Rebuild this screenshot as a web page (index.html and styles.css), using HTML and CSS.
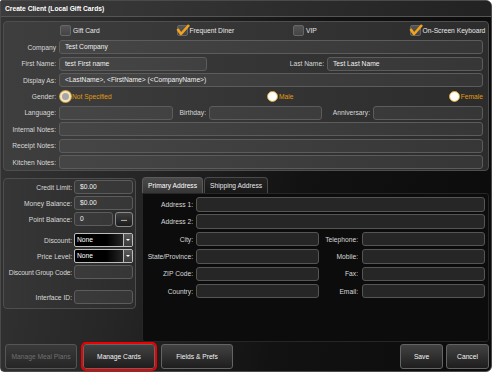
FILE: index.html
```html
<!DOCTYPE html>
<html lang="en">
<head>
  <meta charset="UTF-8" />
  <title>Create Client</title>
  <link rel="stylesheet" href="styles.css">
</head>
<body>
  <div class="window">
    <div class="titlebar">Create Client (Local Gift Cards)</div>
    <div class="content">
      <div class="top-panel">
        <div class="row">
          <span class="lbl"></span>
          <div class="checks">
            <label class="check"><span class="box"></span>Gift Card</label>
            <label class="check on"><span class="box"></span><svg class="tick" viewBox="0 0 14 12"><polyline points="1.5,5 5,10 13,1" /></svg>Frequent Diner</label>
            <label class="check"><span class="box"></span>VIP</label>
            <label class="check on"><span class="box"></span><svg class="tick" viewBox="0 0 14 12"><polyline points="1.5,5 5,10 13,1" /></svg>On-Screen Keyboard</label>
          </div>
        </div>
        <div class="row">
          <span class="lbl">Company</span>
          <div class="field grow">Test Company</div>
        </div>
        <div class="row">
          <span class="lbl">First Name:</span>
          <div class="field w-first">test First name</div>
          <span class="lbl mid grow">Last Name:</span>
          <div class="field w-last">Test Last Name</div>
        </div>
        <div class="row">
          <span class="lbl">Display As:</span>
          <div class="field grow">&lt;LastName&gt;, &lt;FirstName&gt; (&lt;CompanyName&gt;)</div>
        </div>
        <div class="row">
          <span class="lbl">Gender:</span>
          <div class="radios">
            <label class="radio"><span class="dot sel"></span>Not Specified</label>
            <label class="radio"><span class="dot"></span>Male</label>
            <label class="radio"><span class="dot"></span>Female</label>
          </div>
        </div>
        <div class="row">
          <span class="lbl">Language:</span>
          <div class="field w-lang"></div>
          <span class="lbl mid w-bday">Birthday:</span>
          <div class="field w-bdayf"></div>
          <span class="lbl mid grow">Anniversary:</span>
          <div class="field w-anniv"></div>
        </div>
        <div class="row">
          <span class="lbl">Internal Notes:</span>
          <div class="field grow"></div>
        </div>
        <div class="row">
          <span class="lbl">Receipt Notes:</span>
          <div class="field grow"></div>
        </div>
        <div class="row">
          <span class="lbl">Kitchen Notes:</span>
          <div class="field grow"></div>
        </div>
      </div>

      <div class="lower">
        <div class="left-col">
          <div class="money-panel">
            <div class="mrow">
              <span class="mlbl">Credit Limit:</span>
              <div class="field mfield">$0.00</div>
            </div>
            <div class="mrow">
              <span class="mlbl">Money Balance:</span>
              <div class="field mfield">$0.00</div>
            </div>
            <div class="mrow">
              <span class="mlbl">Point Balance:</span>
              <div class="field pfield">0</div>
              <button class="dots">...</button>
            </div>
            <div class="mrow gap-s">
              <span class="mlbl">Discount:</span>
              <div class="combo">None<span class="arrow"></span></div>
            </div>
            <div class="mrow">
              <span class="mlbl">Price Level:</span>
              <div class="combo">None<span class="arrow"></span></div>
            </div>
            <div class="mrow">
              <span class="mlbl wide">Discount Group Code:</span>
              <div class="field mfield"></div>
            </div>
            <div class="mrow gap-l">
              <span class="mlbl">Interface ID:</span>
              <div class="field mfield"></div>
            </div>
          </div>
        </div>

        <div class="tabs-col">
          <div class="tabstrip">
            <div class="tab active">Primary Address</div>
            <div class="tab">Shipping Address</div>
          </div>
          <div class="tab-body">
            <div class="arow">
              <span class="albl">Address 1:</span>
              <div class="field dark grow"></div>
            </div>
            <div class="arow">
              <span class="albl">Address 2:</span>
              <div class="field dark grow"></div>
            </div>
            <div class="arow">
              <span class="albl">City:</span>
              <div class="field dark half"></div>
              <span class="albl rl">Telephone:</span>
              <div class="field dark half"></div>
            </div>
            <div class="arow">
              <span class="albl">State/Province:</span>
              <div class="field dark half"></div>
              <span class="albl rl">Mobile:</span>
              <div class="field dark half"></div>
            </div>
            <div class="arow">
              <span class="albl">ZIP Code:</span>
              <div class="field dark half"></div>
              <span class="albl rl">Fax:</span>
              <div class="field dark half"></div>
            </div>
            <div class="arow">
              <span class="albl">Country:</span>
              <div class="field dark half"></div>
              <span class="albl rl">Email:</span>
              <div class="field dark half"></div>
            </div>
          </div>
        </div>
      </div>

      <div class="buttons">
        <button class="btn disabled">Manage Meal Plans</button>
        <button class="btn marked">Manage Cards</button>
        <button class="btn">Fields &amp; Prefs</button>
        <span class="spacer"></span>
        <button class="btn small">Save</button>
        <button class="btn small">Cancel</button>
      </div>
    </div>
  </div>
</body>
</html>
```

FILE: styles.css
```css
/* Dark POS style dialog */
body {
  margin: 0;
  background: #ffffff;
  font-family: "Liberation Sans", Arial, sans-serif;
  font-size: 6.7px;
  color: #e4e4e4;
}

.window {
  width: 492px;
  height: 372px;
  box-sizing: border-box;
  border: 1px solid #4a4a4a;
  border-radius: 2px 6px 6px 4px;
  background: linear-gradient(100deg, #353535 0%, #262626 30%, #121212 60%, #0b0b0b 100%);
  display: flex;
  flex-direction: column;
  overflow: hidden;
}

.titlebar {
  height: 15px;
  line-height: 15px;
  padding-left: 4px;
  font-weight: bold;
  color: #ffffff;
  background: linear-gradient(to right, #3c3c3c, #2c2c2c 60%, #222222);
  border-bottom: 1px solid #555555;
}

.content {
  flex: 1;
  display: flex;
  flex-direction: column;
  padding: 4px 2px 0 2px;
}

/* top panel */
.top-panel {
  height: 150px;
  box-sizing: border-box;
  border: 1px solid #4e4e4e;
  border-radius: 4px;
  padding: 2px 5px 1px 0;
  background: linear-gradient(to right, #3e3e3e, #333333 60%, #2c2c2c);
  display: flex;
  flex-direction: column;
  gap: 2.43px;
}

.row {
  height: 14px;
  display: flex;
  align-items: center;
}

.lbl {
  width: 52px;
  margin-right: 3px;
  flex: none;
  text-align: right;
  color: #d8d8d8;
  white-space: nowrap;
}

.lbl.mid {
  margin-left: 3px;
}

.grow {
  flex: 1;
}

.field {
  height: 14px;
  box-sizing: border-box;
  border: 1px solid #5c5c5c;
  border-radius: 3px;
  background: rgba(255, 255, 255, 0.05);
  padding-left: 5px;
  line-height: 12px;
  color: #f0f0f0;
  white-space: nowrap;
  overflow: hidden;
}

.w-first { width: 148px; }
.w-last { width: 156px; }
.w-lang { width: 114px; }
.w-bday { width: 30px; }
.w-bdayf { width: 113px; }
.w-anniv { width: 110px; }

.checks {
  flex: 1;
  display: grid;
  grid-template-columns: 116.5px 116.5px 116.5px 1fr;
  margin-left: 1px;
}

.check {
  position: relative;
  display: flex;
  align-items: center;
  gap: 2px;
  color: #e8e8e8;
  white-space: nowrap;
}

.check .box {
  width: 11px;
  height: 11px;
  flex: none;
  box-sizing: border-box;
  border: 1px solid #666666;
  border-radius: 2px;
  background: linear-gradient(#555555, #444444);
}

.tick {
  position: absolute;
  left: -1px;
  top: -1px;
  width: 14px;
  height: 12px;
  overflow: visible;
}

.tick polyline {
  fill: none;
  stroke: #f5a21b;
  stroke-width: 2.6;
  stroke-linejoin: round;
}

.radios {
  flex: 1;
  display: flex;
  justify-content: space-between;
  margin-left: 1px;
}

.radio {
  display: flex;
  align-items: center;
  color: #e09a10;
}

.dot {
  width: 11px;
  height: 11px;
  box-sizing: border-box;
  border-radius: 50%;
  background: #ffffff;
  border: 1px solid #e0a030;
  margin-right: 1px;
}

.dot.sel {
  background: #a6a6a6;
  border: 2px solid #f3e6c4;
  box-shadow: 0 0 0 1px #d8a040;
}

/* lower area */
.lower {
  height: 167px;
  margin-top: 4px;
  display: flex;
  gap: 5px;
}

.left-col {
  width: 134px;
  flex: none;
  padding-top: 3px;
}

.money-panel {
  width: 133px;
  height: 131px;
  box-sizing: border-box;
  border: 1px solid #4e4e4e;
  border-radius: 4px;
  padding: 1px 2px 0 0;
  background: linear-gradient(to right, #363636, #2c2c2c);
  display: flex;
  flex-direction: column;
  gap: 2px;
}

.mrow {
  height: 14px;
  display: flex;
  align-items: center;
}

.mrow.gap-s { margin-top: 5px; }
.mrow.gap-l { margin-top: 9px; }

.mlbl {
  width: 68px;
  margin-right: 2px;
  flex: none;
  text-align: right;
  color: #d8d8d8;
  white-space: nowrap;
}

.mlbl.wide {
  letter-spacing: -0.15px;
}

.mfield { width: 59px; }
.pfield { width: 39px; }

.dots {
  width: 18px;
  height: 15px;
  margin-left: 2px;
  padding: 0 0 3px 0;
  border: 1px solid #8a8a8a;
  border-radius: 3px;
  background: linear-gradient(#3e3e3e, #1c1c1c);
  color: #ffffff;
  font: bold 7px "Liberation Sans", Arial, sans-serif;
  line-height: 8px;
  display: flex;
  align-items: flex-end;
  justify-content: center;
}

.combo {
  width: 59px;
  height: 14px;
  box-sizing: border-box;
  border: 1px solid #bdbdbd;
  border-radius: 2px;
  background: linear-gradient(to right, #000000 55%, #3a3a3a);
  color: #ffffff;
  padding-left: 2px;
  line-height: 12px;
  display: flex;
  justify-content: space-between;
}

.arrow {
  width: 8px;
  height: 12px;
  border-left: 1px solid #bdbdbd;
  background: linear-gradient(#5a5a5a, #3a3a3a);
  display: flex;
  align-items: center;
  justify-content: center;
}

.arrow::after {
  content: "";
  border-left: 2px solid transparent;
  border-right: 2px solid transparent;
  border-top: 2px solid #ffffff;
}

/* address tabs */
.tabs-col {
  flex: 1;
  display: flex;
  flex-direction: column;
  padding-top: 2px;
}

.tabstrip {
  height: 16px;
  display: flex;
  gap: 1px;
}

.tab {
  padding: 0 5px;
  line-height: 15px;
  border: 1px solid #4a4a4a;
  border-bottom: none;
  border-radius: 4px 4px 0 0;
  background: linear-gradient(#242424, #181818);
  color: #e8e8e8;
}

.tab.active {
  background: linear-gradient(#4a4a4a, #363636);
  border-color: #5a5a5a;
  color: #ffffff;
}

.tab-body {
  flex: 1;
  border: 1px solid #262626;
  border-radius: 0 3px 3px 3px;
  background: #0c0c0c;
  padding: 3px 3px 0 0;
  display: flex;
  flex-direction: column;
  gap: 2.9px;
}

.arow {
  height: 14.5px;
  display: flex;
  align-items: center;
}

.albl {
  width: 50px;
  margin-right: 3px;
  flex: none;
  text-align: right;
  color: #d8d8d8;
  white-space: nowrap;
}

.albl.rl {
  width: 36px;
  margin-left: 3px;
  margin-right: 4px;
}

.field.dark {
  height: 14.5px;
  background: #262626;
  border-color: #555555;
}

.half {
  width: 123px;
}

/* bottom buttons */
.buttons {
  height: 29px;
  box-sizing: border-box;
  padding: 2px 0 2px 2px;
  display: flex;
  align-items: flex-start;
  gap: 6px;
}

.spacer {
  flex: 1;
}

.btn {
  width: 72px;
  height: 25px;
  border: 1px solid #646464;
  border-radius: 3px;
  background: linear-gradient(#424242, #1e1e1e);
  color: #f4f4f4;
  font: 6.7px "Liberation Sans", Arial, sans-serif;
  padding: 0;
}

.btn.small {
  width: 43px;
  margin-left: -3px;
}

.btn.disabled {
  color: #707070;
  border-color: #555555;
  background: linear-gradient(#3a3a3a, #262626);
}

.btn.marked {
  outline: 2px solid #ee0000;
}
```
